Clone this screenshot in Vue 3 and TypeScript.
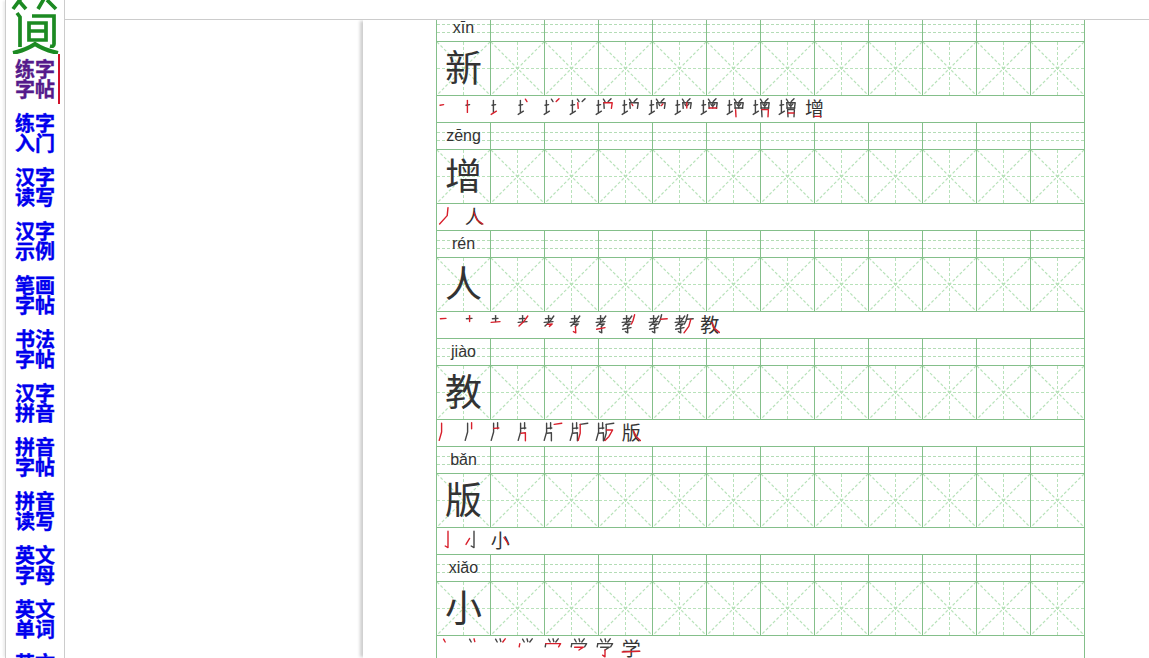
<script setup lang="ts">
type Stroke = number[]

const navItems: string[] = [
  '练字字帖', '练字入门', '汉字读写', '汉字示例', '笔画字帖', '书法字帖',
  '汉字拼音', '拼音字帖', '拼音读写', '英文字母', '英文单词', '英文字帖'
]

const strokeData: Record<string, Stroke[]> = {
  增: [
    [10, 36, 28, 33], [17, 12, 17, 72], [6, 82, 32, 66],
    [42, 6, 50, 18], [80, 4, 66, 18],
    [44, 24, 46, 52], [44, 24, 86, 24, 82, 52], [54, 30, 59, 38], [74, 30, 67, 38], [64, 24, 64, 50], [45, 50, 84, 50],
    [48, 58, 50, 94], [48, 58, 82, 58, 80, 94], [50, 75, 80, 75], [50, 92, 80, 92]
  ],
  人: [[50, 8, 46, 48, 8, 90], [50, 34, 66, 70, 94, 90]],
  教: [
    [12, 24, 40, 22], [28, 8, 28, 38], [6, 42, 50, 38], [54, 10, 34, 38, 10, 60],
    [22, 52, 46, 50, 32, 62], [32, 62, 34, 94, 22, 88], [8, 76, 50, 68],
    [68, 4, 60, 34, 52, 50], [62, 26, 96, 24], [84, 26, 74, 62, 50, 94], [60, 42, 72, 72, 97, 92]
  ],
  版: [
    [18, 6, 18, 50, 6, 92], [38, 4, 38, 34], [18, 32, 44, 30], [20, 56, 42, 54, 42, 94],
    [56, 12, 94, 6], [56, 12, 56, 56, 46, 92], [58, 40, 88, 40, 70, 72, 50, 92], [62, 44, 76, 72, 97, 92]
  ],
  小: [[50, 6, 50, 88, 36, 80], [28, 42, 10, 72], [70, 38, 92, 68]],
  学: [
    [28, 6, 36, 20], [50, 4, 54, 18], [76, 4, 64, 20], [14, 28, 11, 44], [14, 28, 88, 28, 78, 44],
    [28, 46, 72, 46, 50, 60], [50, 60, 50, 94, 38, 86], [6, 70, 94, 66]
  ]
}

interface Section {
  pinyin: string
  char: string
  frames: string
}

const sections: Section[] = [
  { pinyin: 'xīn', char: '新', frames: '增' },
  { pinyin: 'zēng', char: '增', frames: '人' },
  { pinyin: 'rén', char: '人', frames: '教' },
  { pinyin: 'jiào', char: '教', frames: '版' },
  { pinyin: 'bǎn', char: '版', frames: '小' },
  { pinyin: 'xiǎo', char: '小', frames: '学' }
]

function toPoints(stroke: Stroke): string {
  const pairs: string[] = []
  for (let i = 0; i < stroke.length; i += 2) pairs.push(`${stroke[i]},${stroke[i + 1]}`)
  return pairs.join(' ')
}

function frameCount(char: string): number {
  return strokeData[char].length
}

function drawn(char: string, count: number): Stroke[] {
  return strokeData[char].slice(0, count)
}
</script>

<template>
  <div class="page">
    <aside class="sidebar">
      <svg class="logo" viewBox="0 0 58 54" role="img" aria-label="简">
        <g fill="none" stroke="#1c8a22" stroke-width="3.7">
          <path d="M16 -3 L7 9 M13 1 L20 9" />
          <path d="M39 -3 L32 9 M41 0 L50 9" />
          <path d="M11 13 L14 17 L14 47" />
          <path d="M26 16 L48 16 L48 44 Q48 47 44 46" />
          <path d="M23 23 H40 V40 H23 Z M23 31 H40" />
          <path d="M7 53 Q20 50 29 44 Q38 50 52 53" stroke-width="4" />
        </g>
      </svg>
      <a
        v-for="(item, i) in navItems"
        :key="item + i"
        href="#"
        class="nav-item"
        :class="{ active: i === 0 }"
      >{{ item }}</a>
    </aside>

    <main class="main">
      <header class="topbar"></header>
      <div class="scroller">
        <div class="paper">
          <div class="sheet">
            <section v-for="s in sections" :key="s.pinyin" class="block">
              <div class="grid-row pinyin-row">
                <div v-for="n in 12" :key="n" class="py-cell">
                  <span v-if="n === 1" class="py-text">{{ s.pinyin }}</span>
                </div>
              </div>
              <div class="grid-row char-row">
                <div v-for="n in 12" :key="n" class="char-cell">
                  <svg class="guides" viewBox="0 0 53 53" width="53" height="53">
                    <path class="guide-diag" d="M0 0 L53 53 M53 0 L0 53" />
                    <path class="guide-line" d="M26.5 0 V53 M0 26.5 H53" />
                  </svg>
                  <span v-if="n === 1" class="main-char">{{ s.char }}</span>
                </div>
              </div>
              <div class="stroke-row">
                <div v-for="k in frameCount(s.frames)" :key="k" class="frame">
                  <span v-if="k === frameCount(s.frames)" class="frame-char">{{ s.frames }}</span>
                  <svg class="frame-svg" viewBox="0 0 100 100" width="20" height="20">
                    <template v-if="k < frameCount(s.frames)">
                      <polyline
                        v-for="(st, j) in drawn(s.frames, k - 1)"
                        :key="j"
                        :points="toPoints(st)"
                        class="ink"
                      />
                    </template>
                    <polyline :points="toPoints(strokeData[s.frames][k - 1])" class="ink-new" />
                  </svg>
                </div>
              </div>
            </section>
          </div>
        </div>
      </div>
    </main>
  </div>
</template>

<style>
html, body {
  margin: 0;
  height: 100%;
  overflow: hidden;
  background: #fff;
}
</style>

<style scoped>
.page {
  display: flex;
  height: 100vh;
  overflow: hidden;
  background: #fff;
  font-family: "Liberation Sans", "Noto Sans CJK SC", sans-serif;
}

.sidebar {
  flex: none;
  width: 58px;
  margin-left: 5px;
  border-left: 1px solid #ccc;
  border-right: 1px solid #ccc;
  box-shadow: -3px 0 2px -1px #eee;
  overflow: hidden;
  display: flex;
  flex-direction: column;
  gap: 4px;
}

.logo {
  flex: none;
  width: 58px;
  height: 54px;
  margin-bottom: -4px;
  overflow: hidden;
}

.nav-item {
  flex: none;
  box-sizing: border-box;
  display: block;
  width: 54px;
  height: 50px;
  padding: 5px 3px 0 9px;
  border-right: 2px solid transparent;
  font-family: "Noto Sans CJK SC", "Liberation Sans", sans-serif;
  font-size: 20px;
  line-height: 20px;
  font-weight: 700;
  -webkit-text-stroke: 0.35px currentColor;
  color: #0000ee;
  text-decoration: none;
}

.nav-item.active {
  color: #551a8b;
  border-right-color: #d0112b;
}

.main {
  flex: 1;
  min-width: 0;
  display: flex;
  flex-direction: column;
}

.topbar {
  flex: none;
  height: 19px;
  border-bottom: 1px solid #ccc;
  background: #fff;
}

.scroller {
  flex: 1;
  min-height: 0;
  overflow: hidden;
  padding-left: 298px;
}

.paper {
  height: 100%;
  overflow: hidden;
  padding-left: 73px;
  background: #fff;
  box-shadow: -4px 0 3px -1px #cfcfcf;
}

.sheet {
  width: 649px;
  box-sizing: border-box;
  margin-top: -5px;
  border-left: 1px solid #84bf8a;
}

.grid-row {
  display: flex;
}

.py-cell {
  box-sizing: border-box;
  width: 54px;
  height: 27px;
  flex: none;
  border-right: 1px solid #84bf8a;
  border-bottom: 1px solid #84bf8a;
  position: relative;
  background:
    repeating-linear-gradient(90deg, #b4dcb6 0 3px, transparent 3px 5px) 0 9px / 100% 1px no-repeat,
    repeating-linear-gradient(90deg, #b4dcb6 0 3px, transparent 3px 5px) 0 17px / 100% 1px no-repeat;
}

.py-text {
  display: block;
  text-align: center;
  font-size: 16px;
  line-height: 27px;
  color: #333;
  margin-top: -1px;
}

.char-cell {
  box-sizing: border-box;
  width: 54px;
  height: 54px;
  flex: none;
  border-right: 1px solid #84bf8a;
  border-bottom: 1px solid #84bf8a;
  position: relative;
}

.guides {
  position: absolute;
  inset: 0;
  display: block;
}

.guide-diag,
.guide-line {
  fill: none;
  stroke: #b8e2ba;
  stroke-dasharray: 3 2;
}

.guide-diag {
  stroke-width: 1.2;
}

.guide-line {
  stroke-width: 1;
}

.main-char {
  position: absolute;
  inset: 0;
  text-align: center;
  font-family: "Noto Sans CJK SC", sans-serif;
  font-size: 37px;
  line-height: 48px;
  color: #333;
}

.stroke-row {
  box-sizing: border-box;
  height: 27px;
  width: 648px;
  border-right: 1px solid #84bf8a;
  border-bottom: 1px solid #84bf8a;
  display: flex;
  gap: 6.2px;
  padding: 2px 0 0 1px;
}

.frame {
  position: relative;
  flex: none;
  width: 20px;
  height: 20px;
}

.frame-char {
  position: absolute;
  inset: 0;
  font-family: "Noto Sans CJK SC", sans-serif;
  font-size: 19px;
  line-height: 20px;
  text-align: center;
  color: #333;
}

.frame-svg {
  position: absolute;
  inset: 0;
  display: block;
}

.ink,
.ink-new {
  fill: none;
  stroke-width: 7;
  stroke-linecap: round;
  stroke-linejoin: round;
}

.ink {
  stroke: #444;
}

.ink-new {
  stroke: #d8202c;
}
</style>
